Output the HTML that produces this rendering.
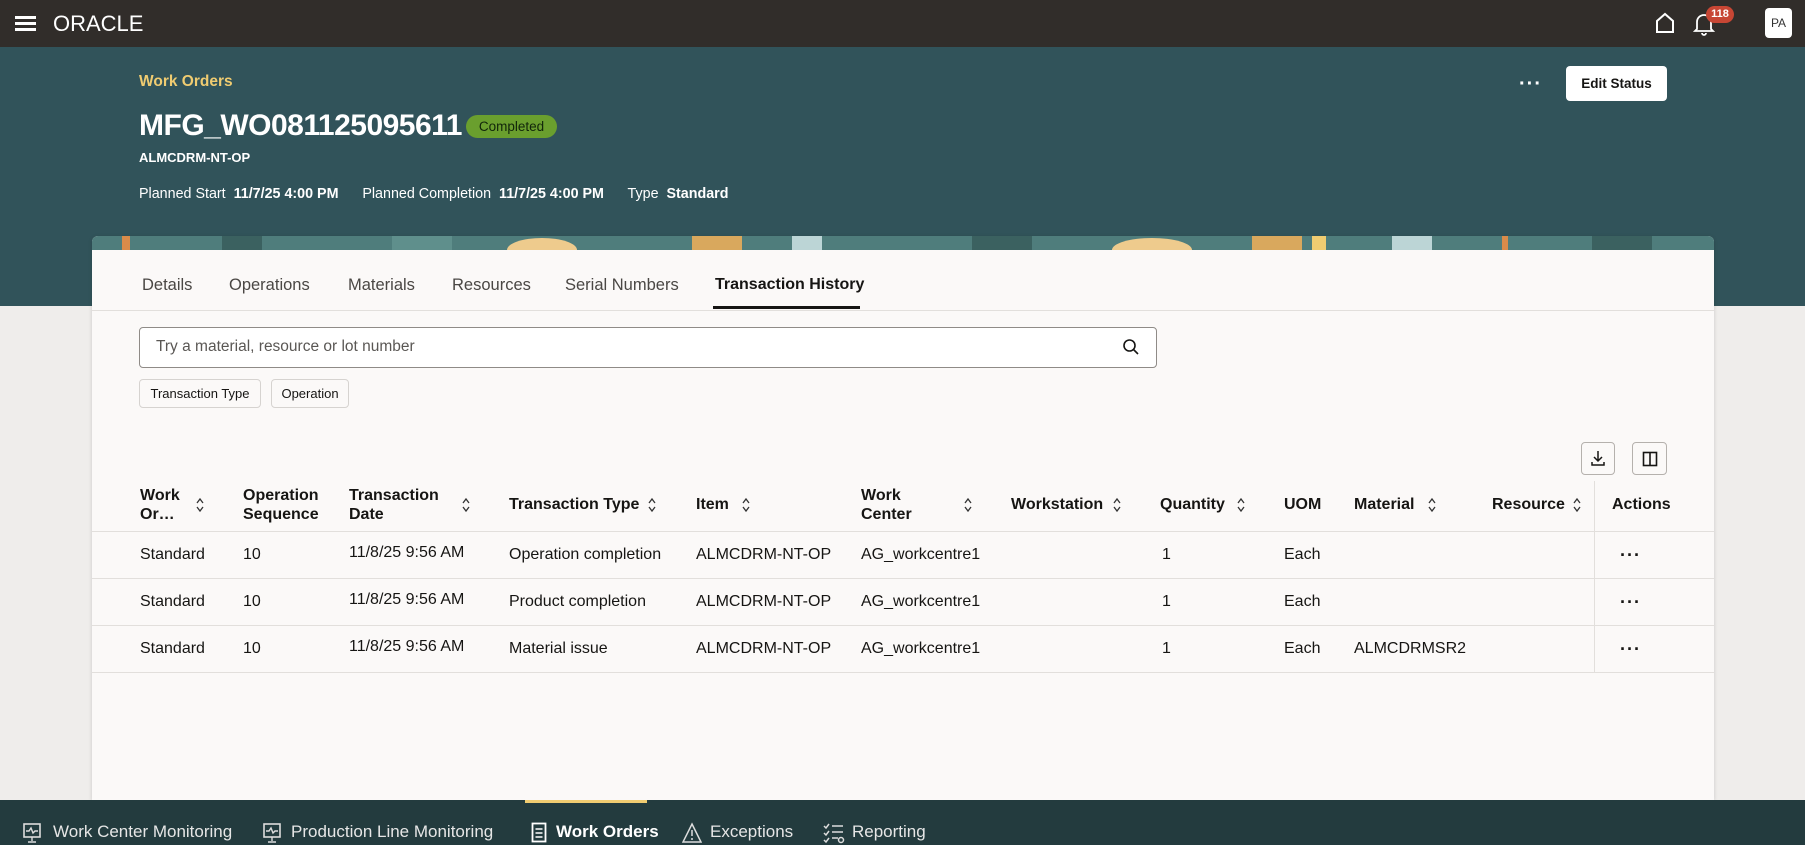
<!DOCTYPE html>
<html><head><meta charset="utf-8"><style>
*{box-sizing:border-box;margin:0;padding:0}
body{width:1805px;height:845px;overflow:hidden;position:relative;font-family:"Liberation Sans",sans-serif;background:#efedeb;color:#161513}
.abs{position:absolute;white-space:nowrap}
.top{position:absolute;left:0;top:0;width:1805px;height:47px;background:#312d2a}
.hdr{position:absolute;left:0;top:47px;width:1805px;height:259px;background:#31535a}
.card{position:absolute;left:92px;top:236px;width:1622px;height:564px;background:#fbf9f8;border-radius:6px 6px 0 0;box-shadow:0 1px 4px rgba(0,0,0,.15)}
.banner{position:absolute;left:92px;top:236px;width:1622px;height:14px;border-radius:6px 6px 0 0;overflow:hidden;background:#4f7d7c}
.nav{position:absolute;left:0;top:800px;width:1805px;height:45px;background:#233b3e}
.th{font-size:16px;font-weight:bold;color:#161513;line-height:19px}
.td{font-size:16px;color:#161513}
.sort{position:absolute;width:10px;height:16px}
.hl{position:absolute;left:92px;width:1622px;height:1px;background:#e2dfdc}
.dots{position:absolute;font-size:18px;font-weight:bold;letter-spacing:1px;color:#161513}
.tab{position:absolute;top:276px;font-size:16.5px;color:#4a4744}
.navt{position:absolute;top:822px;font-size:17px;color:#e6e6e6;font-weight:bold}
</style></head><body>
<svg width="0" height="0" style="position:absolute"><defs><symbol id="srt" viewBox="0 0 10 16"><path d="M2 6l3-4 3 4M2 10l3 4 3-4" fill="none" stroke="#333" stroke-width="1.3"/></symbol></defs></svg>
<div class="top"></div>
<div class="abs" style="left:15px;top:16px;width:21px;height:3px;background:#fff;box-shadow:0 6px 0 #fff,0 12px 0 #fff"></div>
<div class="abs" style="left:53px;top:11px;font-size:22px;color:#fff;letter-spacing:0px">ORACLE</div>
<svg class="abs" style="left:1654px;top:12px" width="22" height="22" viewBox="0 0 22 22"><path d="M3 20V9L11 2L19 9V20Z" fill="none" stroke="#fff" stroke-width="2"/></svg>
<svg class="abs" style="left:1693px;top:12px" width="22" height="24" viewBox="0 0 22 24"><path d="M4 17V10a7 7 0 0 1 14 0v7l2 2H2Z M9 21a2 2 0 0 0 4 0" fill="none" stroke="#fff" stroke-width="1.8"/></svg>
<div class="abs" style="left:1706px;top:6px;width:28px;height:17px;border-radius:9px;background:#c74634;color:#fff;font-size:11px;font-weight:bold;text-align:center;line-height:17px">118</div>
<div class="abs" style="left:1765px;top:8px;width:27px;height:30px;border-radius:4px;background:#fff;color:#333;font-size:12px;text-align:center;line-height:30px">PA</div>

<div class="hdr"></div>
<div class="abs" style="left:139px;top:73px;font-size:15.5px;font-weight:bold;color:#f0cc71">Work Orders</div>
<div class="abs" style="left:139px;top:109px;font-size:30px;font-weight:bold;color:#fff;letter-spacing:-0.5px">MFG_WO081125095611</div>
<div class="abs" style="left:466px;top:115px;width:91px;height:23px;border-radius:12px;background:#6a9f2e;color:#11260a;font-size:13.5px;text-align:center;line-height:23px">Completed</div>
<div class="abs" style="left:139px;top:150px;font-size:13px;font-weight:bold;color:#fff">ALMCDRM-NT-OP</div>
<div class="abs" style="left:139px;top:186px;font-size:14.3px;color:#fff">Planned Start&nbsp; <b>11/7/25 4:00 PM</b>&nbsp;&nbsp;&nbsp;&nbsp;&nbsp; Planned Completion&nbsp; <b>11/7/25 4:00 PM</b>&nbsp;&nbsp;&nbsp;&nbsp;&nbsp; Type&nbsp; <b>Standard</b></div>
<div class="abs" style="left:1519px;top:73px;font-size:20px;color:#fff;font-weight:bold;letter-spacing:1px">···</div>
<div class="abs" style="left:1566px;top:66px;width:101px;height:35px;border-radius:4px;background:#fff;font-size:13.5px;font-weight:bold;text-align:center;line-height:35px;color:#161513">Edit Status</div>

<div class="card"></div>
<div class="banner">
<svg width="1622" height="14"><rect x="30" y="0" width="8" height="14" fill="#d98b4a"/><rect x="130" y="0" width="40" height="14" fill="#3b6160"/><rect x="300" y="0" width="60" height="14" fill="#5f8f8c"/><ellipse cx="450" cy="14" rx="35" ry="12" fill="#eecb8d"/><rect x="600" y="0" width="50" height="14" fill="#d9a85d"/><rect x="700" y="0" width="30" height="14" fill="#bcd5d6"/><rect x="880" y="0" width="60" height="14" fill="#3b6160"/><ellipse cx="1060" cy="14" rx="40" ry="12" fill="#eecb8d"/><rect x="1160" y="0" width="50" height="14" fill="#d9a85d"/><rect x="1220" y="0" width="14" height="14" fill="#f0cc71"/><rect x="1300" y="0" width="40" height="14" fill="#bcd5d6"/><rect x="1410" y="0" width="6" height="14" fill="#d98b4a"/><rect x="1500" y="0" width="60" height="14" fill="#3b6160"/></svg>
</div>

<div class="tab" style="left:142px">Details</div>
<div class="tab" style="left:229px">Operations</div>
<div class="tab" style="left:348px">Materials</div>
<div class="tab" style="left:452px">Resources</div>
<div class="tab" style="left:565px">Serial Numbers</div>
<div class="tab" style="left:715px;color:#161513;font-weight:bold;font-size:16px">Transaction History</div>
<div class="abs" style="left:713px;top:306px;width:147px;height:3px;background:#161513"></div>
<div class="hl" style="top:310px"></div>

<div class="abs" style="left:139px;top:327px;width:1018px;height:41px;border:1px solid #8f8b87;border-radius:4px;background:#fff"></div>
<div class="abs" style="left:156px;top:338px;font-size:15.5px;color:#5a5754">Try a material, resource or lot number</div>
<svg class="abs" style="left:1122px;top:338px" width="18" height="18" viewBox="0 0 18 18"><circle cx="7.5" cy="7.5" r="5.5" fill="none" stroke="#161513" stroke-width="1.6"/><path d="M11.5 11.5L16 16" stroke="#161513" stroke-width="1.6"/></svg>
<div class="abs" style="left:139px;top:379px;width:122px;height:29px;border:1px solid #d6d3d0;border-radius:4px;background:#fbf9f8;font-size:13px;text-align:center;line-height:27px">Transaction Type</div>
<div class="abs" style="left:271px;top:379px;width:78px;height:29px;border:1px solid #d6d3d0;border-radius:4px;background:#fbf9f8;font-size:13px;text-align:center;line-height:27px">Operation</div>

<div class="abs" style="left:1581px;top:442px;width:34px;height:33px;border:1px solid #b5b1ad;border-radius:4px;background:#fbf9f8"></div>
<svg class="abs" style="left:1589px;top:449px" width="18" height="18" viewBox="0 0 18 18"><path d="M9 2v10M5 8l4 4 4-4M3 13v3h12v-3" fill="none" stroke="#161513" stroke-width="1.5"/></svg>
<div class="abs" style="left:1632px;top:442px;width:35px;height:33px;border:1px solid #b5b1ad;border-radius:4px;background:#fbf9f8"></div>
<svg class="abs" style="left:1641px;top:450px" width="18" height="18" viewBox="0 0 18 18"><rect x="2.5" y="2.5" width="13" height="13" fill="none" stroke="#161513" stroke-width="1.6"/><path d="M9 2.5v13" stroke="#161513" stroke-width="1.6"/></svg>

<div class="th abs" style="left:140px;top:486px">Work<br>Or…</div>
<div class="th abs" style="left:243px;top:486px">Operation<br>Sequence</div>
<div class="th abs" style="left:349px;top:486px">Transaction<br>Date</div>
<div class="th abs" style="left:509px;top:495px">Transaction Type</div>
<div class="th abs" style="left:696px;top:495px">Item</div>
<div class="th abs" style="left:861px;top:486px">Work<br>Center</div>
<div class="th abs" style="left:1011px;top:495px">Workstation</div>
<div class="th abs" style="left:1160px;top:495px">Quantity</div>
<div class="th abs" style="left:1284px;top:495px">UOM</div>
<div class="th abs" style="left:1354px;top:495px">Material</div>
<div class="th abs" style="left:1492px;top:495px">Resource</div>
<div class="th abs" style="left:1612px;top:495px">Actions</div>
<svg class="sort" style="left:195px;top:497px"><use href="#srt"/></svg>
<svg class="sort" style="left:461px;top:497px"><use href="#srt"/></svg>
<svg class="sort" style="left:647px;top:497px"><use href="#srt"/></svg>
<svg class="sort" style="left:741px;top:497px"><use href="#srt"/></svg>
<svg class="sort" style="left:963px;top:497px"><use href="#srt"/></svg>
<svg class="sort" style="left:1112px;top:497px"><use href="#srt"/></svg>
<svg class="sort" style="left:1236px;top:497px"><use href="#srt"/></svg>
<svg class="sort" style="left:1427px;top:497px"><use href="#srt"/></svg>
<svg class="sort" style="left:1572px;top:497px"><use href="#srt"/></svg>
<div class="abs" style="left:1594px;top:481px;width:1px;height:191px;background:#e2dfdc"></div>
<div class="hl" style="top:531px"></div>
<div class="hl" style="top:578px"></div>
<div class="hl" style="top:625px"></div>
<div class="hl" style="top:672px"></div>

<div class="td abs" style="left:140px;top:546px">Standard</div><div class="td abs" style="left:243px;top:546px">10</div><div class="td abs" style="left:349px;top:544px">11/8/25 9:56 AM</div><div class="td abs" style="left:509px;top:546px">Operation completion</div><div class="td abs" style="left:696px;top:546px">ALMCDRM-NT-OP</div><div class="td abs" style="left:861px;top:546px">AG_workcentre1</div><div class="td abs" style="left:1162px;top:546px">1</div><div class="td abs" style="left:1284px;top:546px">Each</div><div class="dots" style="left:1620px;top:545px">···</div>
<div class="td abs" style="left:140px;top:593px">Standard</div><div class="td abs" style="left:243px;top:593px">10</div><div class="td abs" style="left:349px;top:591px">11/8/25 9:56 AM</div><div class="td abs" style="left:509px;top:593px">Product completion</div><div class="td abs" style="left:696px;top:593px">ALMCDRM-NT-OP</div><div class="td abs" style="left:861px;top:593px">AG_workcentre1</div><div class="td abs" style="left:1162px;top:593px">1</div><div class="td abs" style="left:1284px;top:593px">Each</div><div class="dots" style="left:1620px;top:592px">···</div>
<div class="td abs" style="left:140px;top:640px">Standard</div><div class="td abs" style="left:243px;top:640px">10</div><div class="td abs" style="left:349px;top:638px">11/8/25 9:56 AM</div><div class="td abs" style="left:509px;top:640px">Material issue</div><div class="td abs" style="left:696px;top:640px">ALMCDRM-NT-OP</div><div class="td abs" style="left:861px;top:640px">AG_workcentre1</div><div class="td abs" style="left:1162px;top:640px">1</div><div class="td abs" style="left:1284px;top:640px">Each</div><div class="td abs" style="left:1354px;top:640px">ALMCDRMSR2</div><div class="dots" style="left:1620px;top:639px">···</div>

<div class="nav"></div>
<div class="abs" style="left:525px;top:800px;width:122px;height:3px;background:#f0cc71"></div>
<svg class="abs" style="left:22px;top:822px" width="20" height="22" viewBox="0 0 20 22"><rect x="2" y="2" width="16" height="13" fill="none" stroke="#ddd" stroke-width="1.6"/><path d="M4 9h3l2-3 2 5 2-2h3M10 15v4M6 20h8" fill="none" stroke="#ddd" stroke-width="1.4"/></svg>
<div class="navt" style="left:53px;font-weight:normal">Work Center Monitoring</div>
<svg class="abs" style="left:262px;top:822px" width="20" height="22" viewBox="0 0 20 22"><rect x="2" y="2" width="16" height="13" fill="none" stroke="#ddd" stroke-width="1.6"/><path d="M4 9h3l2-3 2 5 2-2h3M10 15v4M6 20h8" fill="none" stroke="#ddd" stroke-width="1.4"/></svg>
<div class="navt" style="left:291px;font-weight:normal">Production Line Monitoring</div>
<svg class="abs" style="left:531px;top:822px" width="16" height="22" viewBox="0 0 16 22"><rect x="1.5" y="1.5" width="13" height="18" fill="none" stroke="#fff" stroke-width="1.8"/><path d="M4.5 7h7M4.5 11h7M4.5 15h7" stroke="#fff" stroke-width="1.6"/></svg>
<div class="navt" style="left:556px;color:#fff">Work Orders</div>
<svg class="abs" style="left:682px;top:822px" width="20" height="22" viewBox="0 0 20 22"><path d="M10 2L19 20H1Z M10 8v6M10 16v2" fill="none" stroke="#ddd" stroke-width="1.5"/></svg>
<div class="navt" style="left:710px;font-weight:normal">Exceptions</div>
<svg class="abs" style="left:823px;top:822px" width="22" height="22" viewBox="0 0 22 22"><path d="M1 4l2 2 3-4M1 11l2 2 3-4M1 18l2 2 3-4M9 4h11M9 10h11M9 16h6" fill="none" stroke="#ddd" stroke-width="1.5"/><circle cx="18" cy="18" r="2.5" fill="none" stroke="#ddd" stroke-width="1.5"/></svg>
<div class="navt" style="left:852px;font-weight:normal">Reporting</div>
</body></html>
